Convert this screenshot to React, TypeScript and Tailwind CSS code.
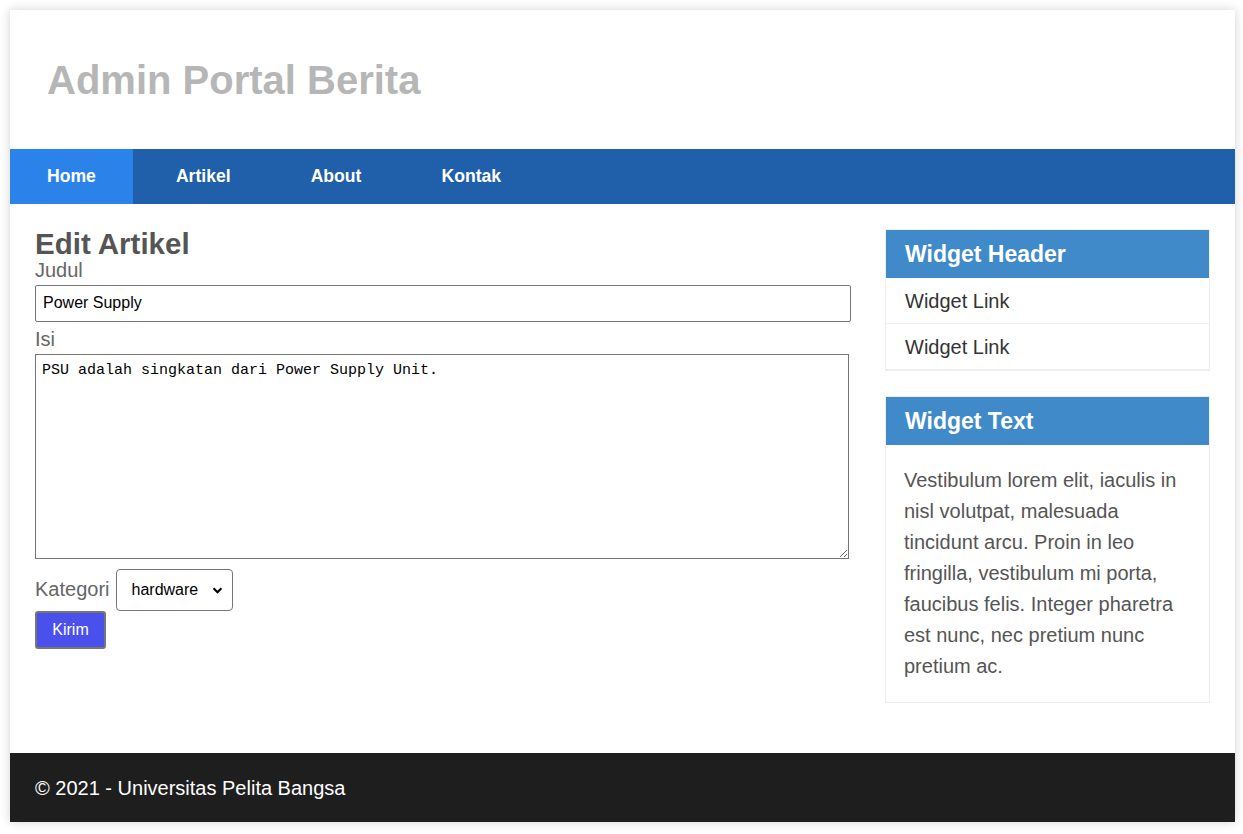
import React from "react"

const navItems = ["Home", "Artikel", "About", "Kontak"]

function Widget({ title, children }: { title: string; children: React.ReactNode }) {
  return (
    <div className="mb-[25px] border border-[#eeeeee] bg-white">
      <div className="flex h-[48px] items-center bg-[#418ac9] px-[19px] text-[23px] font-bold text-white">
        {title}
      </div>
      {children}
    </div>
  )
}

export default function App() {
  return (
    <div className="min-h-screen bg-white p-[10px] font-['Liberation_Sans',Arial,sans-serif]">
      <div className="flex w-[1225px] flex-col bg-white shadow-[0_0_10px_rgba(0,0,0,0.18)]">
        <header className="flex h-[139px] items-center px-[37px]">
          <h1 className="text-[40px] font-bold text-[#b6b6b6]">Admin Portal Berita</h1>
        </header>

        <nav className="flex h-[55px] gap-[6px] bg-[#205fa9]">
          {navItems.map((item, i) => (
            <a
              key={item}
              href="#"
              className={
                "flex items-center px-[37px] text-[17.6px] font-bold text-white " +
                (i === 0 ? "bg-[#2b83ea]" : "")
              }
            >
              {item}
            </a>
          ))}
        </nav>

        <main className="flex px-[25px] pt-[25px] pb-[25px]">
          <section className="w-[816px]">
            <h2 className="text-[29.5px] leading-none font-bold text-[#555555]">Edit Artikel</h2>
            <form className="flex flex-col">
              <label className="text-[20px] leading-[23px] text-[#666666]">Judul</label>
              <input
                type="text"
                defaultValue="Power Supply"
                className="mt-[3px] h-[37px] w-[816px] rounded-[2px] border border-[#767676] px-[7px] text-[16px] text-black outline-none"
              />
              <label className="mt-[6px] text-[20px] leading-[23px] text-[#666666]">Isi</label>
              <textarea
                defaultValue="PSU adalah singkatan dari Power Supply Unit."
                className="mt-[3px] h-[205px] w-[814px] border border-[#767676] px-[6px] pt-[7px] pb-[6px] font-['Liberation_Mono','DejaVu_Sans_Mono',monospace] text-[15px] leading-[18px] text-black outline-none"
              />
              <div className="mt-[10px] flex items-center gap-[6px]">
                <label className="text-[20px] leading-[23px] text-[#666666]">Kategori</label>
                <div className="relative">
                  <select
                    defaultValue="hardware"
                    className="h-[42px] w-[117px] appearance-none rounded-[4px] border border-[#767676] bg-white pl-[15px] text-[16px] text-black outline-none"
                  >
                    <option value="hardware">hardware</option>
                    <option value="software">software</option>
                  </select>
                  <svg
                    viewBox="0 0 12 8"
                    className="pointer-events-none absolute top-[18px] right-[10px] h-[7px] w-[11px]"
                  >
                    <path d="M1.5 1.5 L6 6 L10.5 1.5" fill="none" stroke="#000" strokeWidth="2.4" />
                  </svg>
                </div>
              </div>
              <div>
                <button
                  type="button"
                  className="h-[38px] w-[71px] rounded-[3px] border-2 border-[#767676] bg-[#4a50ec] text-[16px] text-white"
                >
                  Kirim
                </button>
              </div>
            </form>
          </section>

          <aside className="ml-auto w-[325px]">
            <Widget title="Widget Header">
              <a href="#" className="flex h-[46px] items-center border-b border-[#eeeeee] px-[19px] text-[20px] text-[#333333]">
                Widget Link
              </a>
              <a href="#" className="flex h-[46px] items-center border-b border-[#eeeeee] px-[19px] text-[20px] text-[#333333]">
                Widget Link
              </a>
            </Widget>
            <Widget title="Widget Text">
              <p className="px-[18px] pt-[20px] pb-[20px] text-[20px] leading-[31px] text-[#555555]">
                Vestibulum lorem elit, iaculis in nisl volutpat, malesuada tincidunt arcu. Proin in leo fringilla,
                vestibulum mi porta, faucibus felis. Integer pharetra est nunc, nec pretium nunc pretium ac.
              </p>
            </Widget>
          </aside>
        </main>

        <footer className="flex h-[69px] items-center bg-[#1e1e1e] px-[25px] text-[20px] text-white">
          © 2021 - Universitas Pelita Bangsa
        </footer>
      </div>
    </div>
  )
}
